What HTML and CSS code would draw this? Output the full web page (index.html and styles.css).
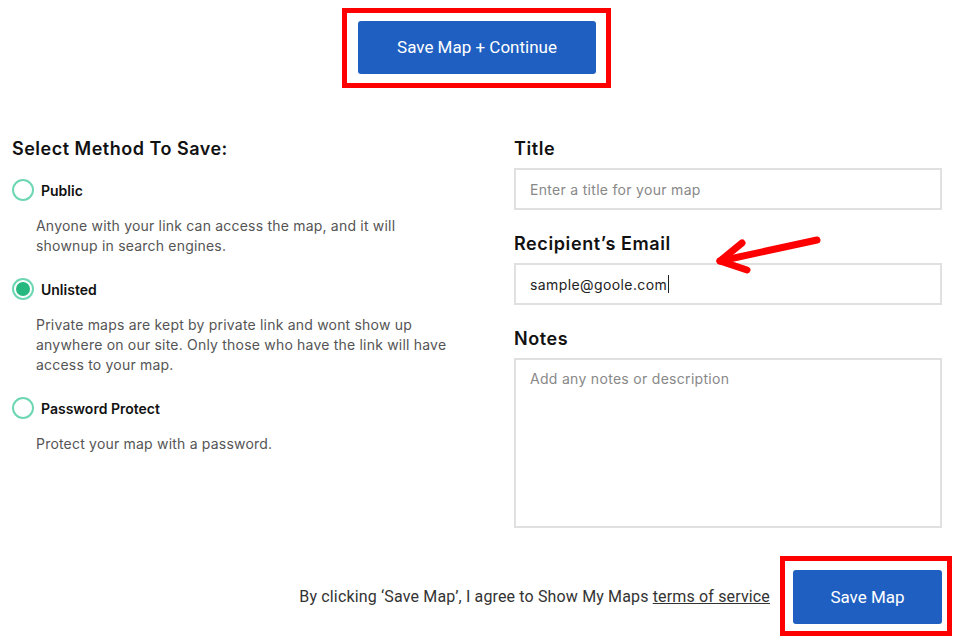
FILE: index.html
```html
<!DOCTYPE html>
<html lang="en">
<head>
    <meta charset="UTF-8">
    <title>Save Map</title>
    <link rel="stylesheet" href="styles.css">
</head>

<body>
    <div class="page">
        <div class="top-bar">
            <div class="highlight highlight-top">
                <button class="btn-primary btn-continue">Save Map + Continue</button>
            </div>
        </div>

        <div class="save-form">
            <div class="method-col">
                <h2>Select Method To Save:</h2>

                <div class="option">
                    <label class="option-label">
                        <span class="radio"></span>
                        <span>Public</span>
                    </label>
                    <p>Anyone with your link can access the map, and it will shownup in search engines.</p>
                </div>

                <div class="option">
                    <label class="option-label">
                        <span class="radio checked"></span>
                        <span>Unlisted</span>
                    </label>
                    <p>Private maps are kept by private link and wont show up anywhere on our site. Only those who have the link will have access to your map.</p>
                </div>

                <div class="option">
                    <label class="option-label">
                        <span class="radio"></span>
                        <span>Password Protect</span>
                    </label>
                    <p>Protect your map with a password.</p>
                </div>
            </div>

            <div class="fields-col">
                <div class="field">
                    <label>Title</label>
                    <input type="text" placeholder="Enter a title for your map">
                </div>
                <div class="field">
                    <label>Recipient’s Email</label>
                    <div class="fake-input">sample@goole.com<span class="caret"></span></div>
                </div>
                <div class="field">
                    <label>Notes</label>
                    <textarea placeholder="Add any notes or description"></textarea>
                </div>
            </div>
        </div>

        <div class="footer-row">
            <p class="terms">By clicking ‘Save Map’, I agree to Show My Maps <a href="#">terms of service</a></p>
            <div class="highlight highlight-bottom">
                <button class="btn-primary btn-save">Save Map</button>
            </div>
        </div>

        <svg class="annotation-arrow" width="120" height="50" viewBox="0 0 120 50" fill="none" stroke="#ff0000" stroke-width="7" stroke-linecap="round" stroke-linejoin="round">
            <path d="M104 11 L7 32"></path>
            <path d="M29 14 L7 32 L34 41"></path>
        </svg>
    </div>
</body>
</html>
```

FILE: styles.css
```css
:root {
    --blue: #1f5fc1;
    --red: #ff0000;
    --dark: #111111;
    --text: #555555;
    --border: #e0e0e0;
    --ring: #6dd6b2;
    --dot: #27b880;
}

body {
    margin: 0;
    font-family: 'Inter', 'Open Sans', sans-serif;
    color: var(--dark);
    background: #fff;
}

.page {
    position: relative;
    width: 959px;
    height: 644px;
}

/* Top button */
.top-bar {
    display: flex;
    justify-content: center;
    padding: 8px 6px 0 0;
}

.highlight {
    border: 5px solid var(--red);
}

.highlight-top {
    padding: 8px 10px 9px 11px;
}

.btn-primary {
    background: var(--blue);
    color: #fff;
    border: none;
    border-radius: 3px;
    font-family: 'Roboto', sans-serif;
    font-size: 17px;
    cursor: pointer;
}

.btn-continue {
    width: 238px;
    height: 53px;
    padding-bottom: 2px;
}

/* Form columns */
.save-form {
    display: grid;
    grid-template-columns: 1fr 428px;
    column-gap: 34px;
    padding: 49px 17px 0 12px;
}

.method-col h2 {
    margin: 0 0 18px 0;
    font-size: 18px;
    font-weight: 600;
    line-height: 24px;
    letter-spacing: 0.5px;
}

.option {
    margin-bottom: 22px;
}

.option-label {
    display: flex;
    align-items: center;
    gap: 7px;
    font-size: 14px;
    font-weight: 600;
    height: 22px;
}

.radio {
    width: 18px;
    height: 18px;
    border: 2px solid var(--ring);
    border-radius: 50%;
    display: inline-flex;
    align-items: center;
    justify-content: center;
}

.radio.checked::after {
    content: "";
    width: 14px;
    height: 14px;
    border-radius: 50%;
    background: var(--dot);
}

.option p {
    margin: 15px 0 0 24px;
    font-size: 14px;
    line-height: 20px;
    letter-spacing: 0.2px;
    color: var(--text);
    max-width: 418px;
}

.field {
    margin-bottom: 22px;
}

.field label {
    display: block;
    font-size: 18px;
    font-weight: 600;
    line-height: 24px;
    letter-spacing: 0.6px;
    margin-bottom: 7px;
}

.field input,
.field textarea,
.fake-input {
    display: block;
    width: 100%;
    box-sizing: border-box;
    border: 2px solid var(--border);
    padding: 0 14px;
    font-family: 'Inter', 'Open Sans', sans-serif;
    font-size: 14px;
    letter-spacing: 0.3px;
    color: #222;
    background: #fff;
    outline: none;
}

.field input,
.fake-input {
    height: 42px;
}

.fake-input {
    display: flex;
    align-items: center;
    letter-spacing: 0.4px;
}

.caret {
    display: inline-block;
    width: 1px;
    height: 18px;
    background: #222;
    margin-left: 1px;
}

.field textarea {
    height: 170px;
    padding-top: 10px;
    resize: none;
}

input::placeholder,
textarea::placeholder {
    color: #888;
    opacity: 1;
}

/* Footer */
.footer-row {
    display: flex;
    justify-content: flex-end;
    align-items: center;
    gap: 10px;
    padding: 6px 7px 0 0;
}

.terms {
    margin: 0;
    font-family: 'Roboto', sans-serif;
    font-size: 16px;
    letter-spacing: 0.15px;
    color: #333;
}

.terms a {
    color: #333;
}

.highlight-bottom {
    padding: 9px 5px 7px 8px;
}

.btn-save {
    width: 149px;
    height: 54px;
}

/* Red annotation arrow over the email field */
.annotation-arrow {
    position: absolute;
    left: 713px;
    top: 229px;
}
```
